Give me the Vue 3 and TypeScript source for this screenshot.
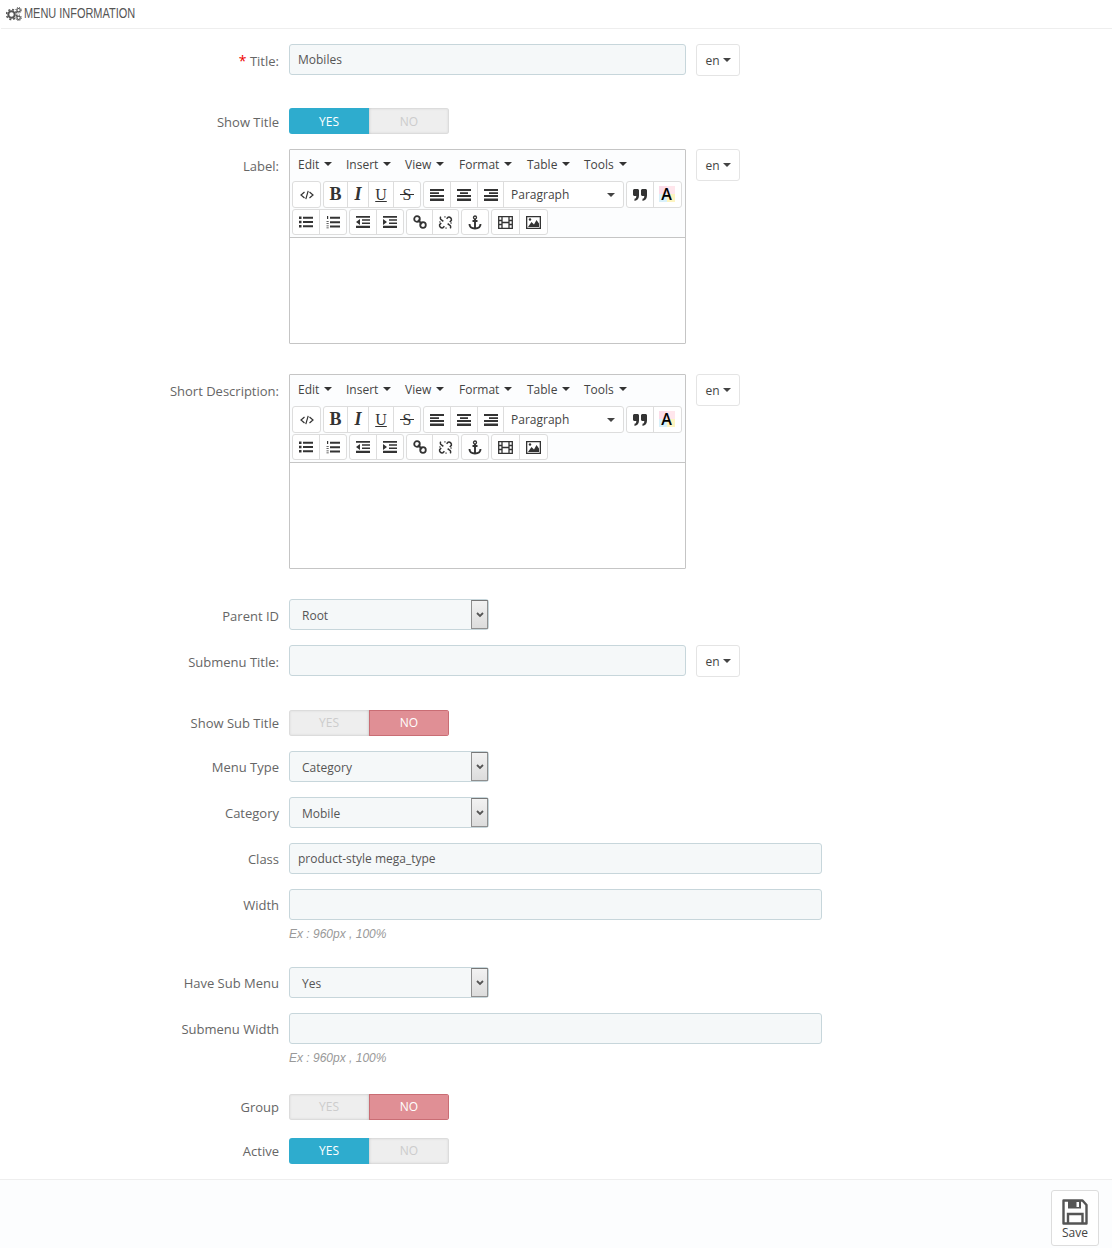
<script setup lang="ts">
const menus = ['Edit', 'Insert', 'View', 'Format', 'Table', 'Tools']
const editors = [
  { label: 'Label:', cls: 'editor-first' },
  { label: 'Short Description:', cls: 'editor-next' },
]
</script>

<template>
  <div class="page">
    <header class="head">
      <svg class="gears" width="16" height="14" viewBox="0 0 16 14">
        <circle cx="5.5" cy="7.5" r="3.2" fill="none" stroke="#555" stroke-width="2" />
        <circle cx="5.5" cy="7.5" r="5" fill="none" stroke="#555" stroke-width="1.6" stroke-dasharray="2 1.93" />
        <circle cx="12.6" cy="3.2" r="1.7" fill="none" stroke="#555" stroke-width="1.2" />
        <circle cx="12.6" cy="3.2" r="2.8" fill="none" stroke="#555" stroke-width="1" stroke-dasharray="1.1 1.1" />
        <circle cx="12.6" cy="10.8" r="1.7" fill="none" stroke="#555" stroke-width="1.2" />
        <circle cx="12.6" cy="10.8" r="2.8" fill="none" stroke="#555" stroke-width="1" stroke-dasharray="1.1 1.1" />
      </svg>
      <span class="head-title">MENU INFORMATION</span>
    </header>

    <form class="form" @submit.prevent>
      <div class="row mt15">
        <label class="lab"><span class="req">*</span> Title:</label>
        <div class="input w397">Mobiles</div>
        <div class="lang">en<i class="caret"></i></div>
      </div>

      <div class="row mt32">
        <label class="lab lab-sw">Show Title</label>
        <div class="sw sw-first"><span class="yes on">YES</span><span class="no">NO</span></div>
      </div>

      <div v-for="ed in editors" :key="ed.label" class="row" :class="ed.cls">
        <label class="lab">{{ ed.label }}</label>
        <div class="editor">
          <div class="menubar">
            <span v-for="m in menus" :key="m" class="menu" :class="'m-' + m">{{ m }}<i class="caret"></i></span>
          </div>
          <div class="toolbar">
            <div class="tline">
              <div class="grp">
                <span class="b w27"><svg width="14" height="14" viewBox="0 0 14 14" fill="none" stroke="#333" stroke-width="1.2"><path d="M4.5 4 1 7l3.5 3M9.5 4 13 7l-3.5 3M8.2 2.8 5.8 11.2" /></svg></span>
              </div>
              <div class="grp">
                <span class="b w24 t-b">B</span><span class="b w21 t-i">I</span><span class="b w25 t-u">U</span><span class="b w26 t-s">S</span>
              </div>
              <div class="grp">
                <span class="b w27"><svg width="14" height="12" viewBox="0 0 14 12" fill="#333"><path d="M0 0h14v2H0zM0 3.3h9v1.6H0zM0 6h14v2H0zM0 9.5h14V12H0z" /></svg></span>
                <span class="b w27"><svg width="14" height="12" viewBox="0 0 14 12" fill="#333"><path d="M0 0h14v2H0zM3 3.3h8v1.6H3zM0 6h14v2H0zM0 9.5h14V12H0z" /></svg></span>
                <span class="b w26"><svg width="14" height="12" viewBox="0 0 14 12" fill="#333"><path d="M0 0h14v2H0zM5 3.3h9v1.6H5zM0 6h14v2H0zM0 9.5h14V12H0z" /></svg></span>
                <span class="b para">Paragraph<i class="caret"></i></span>
              </div>
              <div class="grp">
                <span class="b w27"><svg width="14" height="12" viewBox="0 0 14 12" fill="#333"><path d="M0 1.500C0 .7.700 0 1.500 0h3C5.300 0 6 .7 6 1.500v5C6 9.500 4.500 11.500 1.500 12V9.800C3 9.500 3.300 8.600 3.300 7H1.500C.7 7 0 6.300 0 5.500zM8 1.500C8 .7 8.700 0 9.500 0h3c.8 0 1.500.7 1.500 1.500v5c0 3-1.500 5-4.500 5.500V9.800c1.500-.3 1.800-1.200 1.800-2.800H9.500C8.700 7 8 6.300 8 5.500z" /></svg></span>
                <span class="b w27 color"><span class="swatch"></span><span class="color-a">A</span></span>
              </div>
            </div>
            <div class="tline tline2">
              <div class="grp">
                <span class="b w27"><svg width="14" height="12" viewBox="0 0 14 12" fill="#333"><path d="M0 .5h2.500v2.500H0zM0 4.800h2.500v2.500H0zM0 9h2.500v2.500H0zM4 .8h10v2H4zM4 5h10v2H4zM4 9.300h10v2H4z" /></svg></span>
                <span class="b w26"><svg width="14" height="13" viewBox="0 0 14 13" fill="#333"><path d="M1 0h1.200v3H1zM.5 5h2.200v.8H.5zM.5 7h2.200v.8H.5zM.5 9.500h2.200v.8H.5zM.5 11.500h2.200v.8H.5zM4 .8h10v2H4zM4 5.200h10v2H4zM4 9.600h10v2H4z" /></svg></span>
              </div>
              <div class="grp">
                <span class="b w27"><svg width="14" height="12" viewBox="0 0 14 12" fill="#333"><path d="M0 0h14v1.800H0zM6 3.300h8v1.500H6zM6 6.400h8v1.500H6zM0 9.800h14V12H0zM4 3v6L0 6z" /></svg></span>
                <span class="b w26"><svg width="14" height="12" viewBox="0 0 14 12" fill="#333"><path d="M0 0h14v1.800H0zM6 3.300h8v1.500H6zM6 6.400h8v1.500H6zM0 9.800h14V12H0zM0 3v6l4-3z" /></svg></span>
              </div>
              <div class="grp">
                <span class="b w26"><svg width="14" height="14" viewBox="0 0 14 14" fill="none" stroke="#333" stroke-width="1.800"><circle cx="4" cy="4" r="2.800" /><circle cx="10" cy="10" r="2.800" /><path d="m5 5 4 4" /></svg></span>
                <span class="b w25"><svg width="15" height="15" viewBox="0 0 14 14" fill="none" stroke="#333" stroke-width="1.400"><path d="M8 3.500 9.500 2a2.500 2.500 0 0 1 3 3L11 6.500M6 10.500 4.500 12a2.500 2.500 0 0 1-3-3L3 7.500M9 8l2.500 2a2.500 2.500 0 0 1 0 2.500M5 6 2.500 4a2.500 2.500 0 0 1 0-2.500" /><path d="M1 6.500h1.500M6.500 1v1.500M13 7.500h-1.500M7.500 13v-1.500" stroke-width=".9" /></svg></span>
              </div>
              <div class="grp">
                <span class="b w26"><svg width="14" height="15" viewBox="0 0 14 15" fill="none" stroke="#333" stroke-width="1.900"><circle cx="7" cy="2.500" r="1.500" stroke-width="1.300" /><path d="M7 4v9.500M4.500 6h5M1.500 9c0 3 2.500 4.500 5.500 4.500S12.500 12 12.500 9" /></svg></span>
              </div>
              <div class="grp">
                <span class="b w28"><svg width="15" height="13" viewBox="0 0 15 13" fill="none" stroke="#333" stroke-width="1.300"><path d="M.7.700h13.600v11.600H.7zM4 .7v11.600M11 .7v11.600M.7 4.500H4M.7 8.500H4M11 4.500h3.300M11 8.500h3.300M4 6.500h7" /></svg></span>
                <span class="b w27"><svg width="15" height="13" viewBox="0 0 15 13"><path fill="#333" d="M0 0h15v13H0zM1.300 1.300v10.400h12.400V1.300z" fill-rule="evenodd" /><path fill="#333" d="m2 11 3.500-5 2.500 2.500L10.500 4 13 7.500V11z" /><circle cx="4" cy="3.500" r="1.200" fill="#333" /></svg></span>
              </div>
            </div>
          </div>
          <div class="edit-area"></div>
        </div>
        <div class="lang">en<i class="caret"></i></div>
      </div>

      <div class="row mt30">
        <label class="lab">Parent ID</label>
        <div class="sel"><span>Root</span><i class="sel-btn"><svg width="8" height="6" viewBox="0 0 8 6" fill="none" stroke="#555" stroke-width="1.800"><path d="m1 1 3 3 3-3" /></svg></i></div>
      </div>

      <div class="row mt15">
        <label class="lab">Submenu Title:</label>
        <div class="input w397"></div>
        <div class="lang">en<i class="caret"></i></div>
      </div>

      <div class="row mt33">
        <label class="lab lab-sw2">Show Sub Title</label>
        <div class="sw"><span class="yes">YES</span><span class="no on">NO</span></div>
      </div>

      <div class="row mt15">
        <label class="lab lab-7">Menu Type</label>
        <div class="sel"><span>Category</span><i class="sel-btn"><svg width="8" height="6" viewBox="0 0 8 6" fill="none" stroke="#555" stroke-width="1.800"><path d="m1 1 3 3 3-3" /></svg></i></div>
      </div>

      <div class="row mt15">
        <label class="lab lab-7">Category</label>
        <div class="sel"><span>Mobile</span><i class="sel-btn"><svg width="8" height="6" viewBox="0 0 8 6" fill="none" stroke="#555" stroke-width="1.800"><path d="m1 1 3 3 3-3" /></svg></i></div>
      </div>

      <div class="row mt15">
        <label class="lab lab-7">Class</label>
        <div class="input w533">product-style mega_type</div>
      </div>

      <div class="row mt15">
        <label class="lab lab-7">Width</label>
        <div class="stack">
          <div class="input w533"></div>
          <p class="hint">Ex : 960px , 100%</p>
        </div>
      </div>

      <div class="row mt15">
        <label class="lab lab-7">Have Sub Menu</label>
        <div class="sel"><span>Yes</span><i class="sel-btn"><svg width="8" height="6" viewBox="0 0 8 6" fill="none" stroke="#555" stroke-width="1.800"><path d="m1 1 3 3 3-3" /></svg></i></div>
      </div>

      <div class="row mt15">
        <label class="lab lab-7">Submenu Width</label>
        <div class="stack">
          <div class="input w533"></div>
          <p class="hint">Ex : 960px , 100%</p>
        </div>
      </div>

      <div class="row mt18">
        <label class="lab lab-sw2">Group</label>
        <div class="sw"><span class="yes">YES</span><span class="no on">NO</span></div>
      </div>

      <div class="row mt18">
        <label class="lab lab-sw2">Active</label>
        <div class="sw"><span class="yes on">YES</span><span class="no">NO</span></div>
      </div>
    </form>

    <footer class="foot">
      <button class="save" type="button">
        <svg width="26" height="26" viewBox="0 0 26 26" fill="none">
          <path d="M1.500 1.500h19l4 4.500v18.500h-23z" stroke="#555" stroke-width="2.400" stroke-linejoin="round" />
          <path d="M6 1.500h13v8H6z" fill="#555" />
          <path d="M14.500 3h2.500v5h-2.500z" fill="#fcfdfe" />
          <path d="M6 24V15h14.500v9" stroke="#555" stroke-width="2.400" />
        </svg>
        <span>Save</span>
      </button>
    </footer>
  </div>
</template>

<style scoped>
.page {
  width: 1112px;
  height: 1248px;
  background: #fff;
  font-family: "Open Sans", sans-serif;
  font-size: 13px;
  color: #666;
  overflow: hidden;
  display: flex;
  flex-direction: column;
}
.head {
  height: 28px;
  margin-left: 1px;
  box-sizing: content-box;
  border-bottom: 1px solid #eee;
  display: flex;
  align-items: center;
  padding-left: 5px;
  gap: 2px;
  color: #555;
}
.head-title {
  font-family: "Liberation Sans", sans-serif;
  font-size: 15px;
  line-height: 26px;
  white-space: nowrap;
  transform: scaleX(0.73);
  transform-origin: left center;
  margin-bottom: 2px;
}
.gears { flex: none; margin-bottom: 1px; }
.form {
  flex: 1;
  display: flex;
  flex-direction: column;
}
.row {
  display: flex;
  align-items: flex-start;
  gap: 10px;
}
.mt15 { margin-top: 15px; }
.mt18 { margin-top: 18px; }
.mt30 { margin-top: 30px; }
.mt32 { margin-top: 32px; }
.mt33 { margin-top: 33px; }
.editor-first { margin-top: 15px; }
.editor-next { margin-top: 30px; }
.lab {
  width: 279px;
  flex: none;
  text-align: right;
  font-size: 13px;
  line-height: 18px;
  padding-top: 8px;
  box-sizing: border-box;
  color: #666;
}
.lab-sw { padding-top: 5px; }
.lab-sw2 { padding-top: 4px; }
.lab-7 { padding-top: 7px; }
.req { color: #e00; font-size: 14px; }
.input {
  height: 31px;
  box-sizing: border-box;
  background: #f5f8f9;
  border: 1px solid #c7d6db;
  border-radius: 3px;
  padding: 0 8px;
  line-height: 29px;
  font-size: 12px;
  color: #555;
}
.w397 { width: 397px; }
.w533 { width: 533px; }
.lang {
  width: 44px;
  height: 32px;
  box-sizing: border-box;
  border: 1px solid #e4e4e4;
  border-radius: 3px;
  background: #fff;
  color: #444;
  font-size: 12px;
  display: flex;
  align-items: center;
  justify-content: center;
  gap: 3px;
}
.caret {
  display: inline-block;
  width: 0;
  height: 0;
  border-left: 4px solid transparent;
  border-right: 4px solid transparent;
  border-top: 4px solid #444;
}
.sw {
  width: 160px;
  height: 26px;
  display: flex;
  font-size: 12px;
  line-height: 25px;
  text-align: center;
  border-radius: 3px;
  overflow: hidden;
}
.sw-first { line-height: 27px; }
.sw span {
  width: 80px;
  background: #eee;
  color: #ccc;
  box-shadow: inset 0 0 3px #bbb;
}
.sw .yes.on {
  background: #2eacce;
  color: #fff;
  box-shadow: none;
}
.sw .no.on {
  background: #e08f95;
  color: #fff;
  box-shadow: inset 0 0 0 1px #c96d74;
}
.editor {
  width: 397px;
  height: 195px;
  box-sizing: border-box;
  border: 1px solid #c5c5c5;
  border-radius: 1px;
  display: flex;
  flex-direction: column;
  background: #fff;
}
.menubar {
  height: 26px;
  box-sizing: border-box;
  background: #fcfdfe;
  display: flex;
  align-items: center;
  color: #333;
  font-size: 12px;
  padding: 2px 0 0 8px;
}
.menu {
  display: inline-flex;
  align-items: center;
  gap: 5px;
  color: #444;
}
.menu .caret { border-top-color: #333; }
.m-Edit { width: 48px; }
.m-Insert { width: 59px; }
.m-View { width: 54px; }
.m-Format { width: 68px; }
.m-Table { width: 57px; }
.toolbar {
  height: 62px;
  box-sizing: border-box;
  background: #fcfdfe;
  border-bottom: 1px solid #c5c5c5;
  padding: 5px 0 0 2px;
}
.tline {
  display: flex;
  gap: 2px;
  height: 27px;
}
.tline2 { margin-top: 1px; height: 26px; }
.grp {
  display: flex;
  border: 1px solid #ddd;
  border-radius: 3px;
  background: #fff;
  box-sizing: border-box;
}
.b {
  display: flex;
  align-items: center;
  justify-content: center;
  box-sizing: border-box;
  border-right: 1px solid #ddd;
  color: #333;
  flex: none;
}
.b:last-child { border-right: 0; }
.w21 { width: 21px; }
.w24 { width: 24px; }
.w25 { width: 25px; }
.w26 { width: 26px; }
.w27 { width: 27px; }
.w28 { width: 28px; }
.t-b, .t-i, .t-u, .t-s {
  font-family: "Liberation Serif", serif;
  font-size: 18px;
  color: #333;
}
.t-b { font-weight: 700; }
.t-i { font-style: italic; font-weight: 700; }
.t-u { text-decoration: underline; font-size: 16px; }
.t-s { position: relative; font-size: 16px; }
.t-s::after {
  content: "";
  position: absolute;
  left: 6px;
  right: 6px;
  top: 12px;
  height: 1px;
  background: #333;
}
.para {
  width: 119px;
  justify-content: space-between;
  padding: 0 8px 0 7px;
  font-size: 12px;
  color: #444;
}
.color { position: relative; }
.swatch {
  position: absolute;
  left: 5px;
  top: 4px;
  width: 16px;
  height: 16px;
  background: conic-gradient(#ffe6ec 0 25%, #fdf4c0 0 50%, #d8f0fa 0 75%, #fbdce8 0 100%);
}
.color-a {
  position: relative;
  left: -1px;
  top: -1px;
  font-size: 16px;
  font-weight: 600;
  color: #000;
}
.edit-area { flex: 1; }
.sel {
  width: 200px;
  height: 31px;
  box-sizing: border-box;
  display: flex;
  align-items: center;
  justify-content: space-between;
  background: #f5f8f9;
  border: 1px solid #c7d6db;
  border-radius: 3px;
  padding-left: 12px;
  font-size: 12px;
  color: #555;
}
.sel span { padding-top: 1px; }
.sel-btn {
  width: 17px;
  height: 29px;
  box-sizing: border-box;
  border: 1px solid #8f8f8f;
  border-top-color: #777;
  background: linear-gradient(#f2f2f2, #dcdcdc);
  display: flex;
  align-items: center;
  justify-content: center;
}
.stack { display: flex; flex-direction: column; }
.hint {
  margin: 6px 0 0;
  font-family: "Liberation Sans", sans-serif;
  font-size: 12px;
  line-height: 16px;
  font-style: italic;
  color: #999;
  height: 26px;
}
.foot {
  height: 58px;
  flex: none;
  border-top: 1px solid #eee;
  background: #fcfdfe;
  display: flex;
  justify-content: flex-end;
  align-items: flex-start;
  padding: 10px 13px 0 0;
  box-sizing: content-box;
}
.save {
  width: 48px;
  height: 56px;
  box-sizing: border-box;
  border: 1px solid #ddd;
  border-radius: 3px;
  background: #fff;
  color: #444;
  font-family: "Open Sans", sans-serif;
  font-size: 12px;
  padding: 8px 0 0;
  display: flex;
  flex-direction: column;
  align-items: center;
  gap: 0;
  line-height: 16px;
}
</style>
